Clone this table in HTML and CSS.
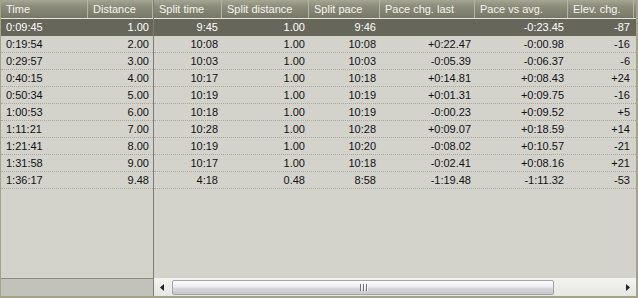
FILE: index.html
```html
<!DOCTYPE html>
<html>
<head>
<meta charset="utf-8">
<link rel="stylesheet" href="styles.css">
</head>
<body>
<div class="grid">
  <div class="pane left">
    <div class="row head">
      <div class="cell l1 txt">Time</div>
      <div class="cell l2 txt">Distance</div>
    </div>
    <div class="row sel"><div class="cell l1 txt">0:09:45</div><div class="cell l2 num">1.00</div></div>
    <div class="row"><div class="cell l1 txt">0:19:54</div><div class="cell l2 num">2.00</div></div>
    <div class="row"><div class="cell l1 txt">0:29:57</div><div class="cell l2 num">3.00</div></div>
    <div class="row"><div class="cell l1 txt">0:40:15</div><div class="cell l2 num">4.00</div></div>
    <div class="row"><div class="cell l1 txt">0:50:34</div><div class="cell l2 num">5.00</div></div>
    <div class="row"><div class="cell l1 txt">1:00:53</div><div class="cell l2 num">6.00</div></div>
    <div class="row"><div class="cell l1 txt">1:11:21</div><div class="cell l2 num">7.00</div></div>
    <div class="row"><div class="cell l1 txt">1:21:41</div><div class="cell l2 num">8.00</div></div>
    <div class="row"><div class="cell l1 txt">1:31:58</div><div class="cell l2 num">9.00</div></div>
    <div class="row"><div class="cell l1 txt">1:36:17</div><div class="cell l2 num">9.48</div></div>
    <div class="filler"></div>
    <div class="footer"></div>
  </div>
  <div class="pane right">
    <div class="row head">
      <div class="cell r1 txt">Split time</div>
      <div class="cell r2 txt">Split distance</div>
      <div class="cell r3 txt">Split pace</div>
      <div class="cell r4 txt">Pace chg. last</div>
      <div class="cell r5 txt">Pace vs avg.</div>
      <div class="cell r6 txt">Elev. chg.</div>
    </div>
    <div class="row sel"><div class="cell r1 num">9:45</div><div class="cell r2 num">1.00</div><div class="cell r3 num">9:46</div><div class="cell r4 num"></div><div class="cell r5 num">-0:23.45</div><div class="cell r6 num">-87</div></div>
    <div class="row"><div class="cell r1 num">10:08</div><div class="cell r2 num">1.00</div><div class="cell r3 num">10:08</div><div class="cell r4 num">+0:22.47</div><div class="cell r5 num">-0:00.98</div><div class="cell r6 num">-16</div></div>
    <div class="row"><div class="cell r1 num">10:03</div><div class="cell r2 num">1.00</div><div class="cell r3 num">10:03</div><div class="cell r4 num">-0:05.39</div><div class="cell r5 num">-0:06.37</div><div class="cell r6 num">-6</div></div>
    <div class="row"><div class="cell r1 num">10:17</div><div class="cell r2 num">1.00</div><div class="cell r3 num">10:18</div><div class="cell r4 num">+0:14.81</div><div class="cell r5 num">+0:08.43</div><div class="cell r6 num">+24</div></div>
    <div class="row"><div class="cell r1 num">10:19</div><div class="cell r2 num">1.00</div><div class="cell r3 num">10:19</div><div class="cell r4 num">+0:01.31</div><div class="cell r5 num">+0:09.75</div><div class="cell r6 num">-16</div></div>
    <div class="row"><div class="cell r1 num">10:18</div><div class="cell r2 num">1.00</div><div class="cell r3 num">10:19</div><div class="cell r4 num">-0:00.23</div><div class="cell r5 num">+0:09.52</div><div class="cell r6 num">+5</div></div>
    <div class="row"><div class="cell r1 num">10:28</div><div class="cell r2 num">1.00</div><div class="cell r3 num">10:28</div><div class="cell r4 num">+0:09.07</div><div class="cell r5 num">+0:18.59</div><div class="cell r6 num">+14</div></div>
    <div class="row"><div class="cell r1 num">10:19</div><div class="cell r2 num">1.00</div><div class="cell r3 num">10:20</div><div class="cell r4 num">-0:08.02</div><div class="cell r5 num">+0:10.57</div><div class="cell r6 num">-21</div></div>
    <div class="row"><div class="cell r1 num">10:17</div><div class="cell r2 num">1.00</div><div class="cell r3 num">10:18</div><div class="cell r4 num">-0:02.41</div><div class="cell r5 num">+0:08.16</div><div class="cell r6 num">+21</div></div>
    <div class="row"><div class="cell r1 num">4:18</div><div class="cell r2 num">0.48</div><div class="cell r3 num">8:58</div><div class="cell r4 num">-1:19.48</div><div class="cell r5 num">-1:11.32</div><div class="cell r6 num">-53</div></div>
    <div class="filler"></div>
    <div class="scrollbar">
      <div class="arrow">
        <svg width="5" height="7" viewBox="0 0 5 7"><polygon points="4,0 4,7 0,3.5" fill="#222"/></svg>
      </div>
      <div class="thumb">
        <span class="grip"></span><span class="grip"></span><span class="grip"></span>
      </div>
      <div class="track"></div>
      <div class="arrow">
        <svg width="5" height="7" viewBox="0 0 5 7"><polygon points="0,0 0,7 4,3.5" fill="#222"/></svg>
      </div>
    </div>
  </div>
</div>
</body>
</html>
```

FILE: styles.css
```css
html, body {
  margin: 0;
  padding: 0;
}
body {
  width: 638px;
  height: 298px;
  overflow: hidden;
  background: #d4d3cb;
  font-family: Tahoma, "Liberation Sans", Arial, sans-serif;
  font-size: 11px;
  color: #101018;
}
.grid {
  box-sizing: border-box;
  width: 638px;
  height: 298px;
  display: flex;
  border-left: 1px solid #a3a38a;
  border-right: 2px solid #a3a38a;
  border-bottom: 2px solid #a3a38a;
  background: #d4d3cb;
}
.pane {
  display: flex;
  flex-direction: column;
  height: 100%;
}
.left {
  width: 152px;
  border-right: 1px solid #7d7d78;
}
.right {
  flex: 1;
  min-width: 0;
}
.row {
  display: flex;
  height: 17px;
  box-sizing: border-box;
  border-bottom: 1px dotted #a8a8a0;
  flex: none;
}
.row.head {
  height: 19px;
  border-bottom: 1px solid #e4e4dc;
  background: linear-gradient(#a6a695 0%, #8c8c7b 35%, #777767 100%);
  color: #f4f4ee;
}
.row.sel {
  background: #66665a;
  color: #ffffff;
  border-bottom: 1px solid #66665a;
}
.cell {
  box-sizing: border-box;
  line-height: 16px;
  white-space: nowrap;
  overflow: hidden;
}
.head .cell {
  line-height: 18px;
  border-right: 1px solid #b4b4a4;
}
.txt {
  text-align: left;
  padding-left: 5px;
}
.num {
  text-align: right;
  padding-right: 4px;
}
.l1 { width: 87px; }
.l2 { width: 65px; }
.r1 { width: 68px; }
.r2 { width: 87px; }
.r3 { width: 71px; }
.r4 { width: 95px; }
.r5 { width: 93px; }
.r6 { width: 66px; }
.head .cell.l1 { padding-left: 5px; }
.filler {
  flex: 1;
}
.footer {
  height: 17px;
  flex: none;
  border-top: 1px solid #8c8c86;
  background: #c2c2ba;
}
.scrollbar {
  height: 17px;
  flex: none;
  display: flex;
  align-items: stretch;
  border-top: 1px solid #f0f0ec;
  background: linear-gradient(#f2f2ee, #e6e6e2);
}
.arrow {
  width: 16px;
  flex: none;
  display: flex;
  align-items: center;
  justify-content: center;
}
.thumb {
  width: 382px;
  flex: none;
  box-sizing: border-box;
  margin: 1px 0 1px 2px;
  border: 1px solid #a4a4a8;
  border-radius: 2px;
  background: linear-gradient(#fbfbfd 0%, #ececf0 45%, #d8d8de 55%, #c6c6cc 100%);
  display: flex;
  align-items: center;
  justify-content: center;
  gap: 2px;
}
.grip {
  width: 1px;
  height: 7px;
  background: #707078;
  box-shadow: 1px 0 0 #ffffff;
}
.track {
  flex: 1;
}
```
